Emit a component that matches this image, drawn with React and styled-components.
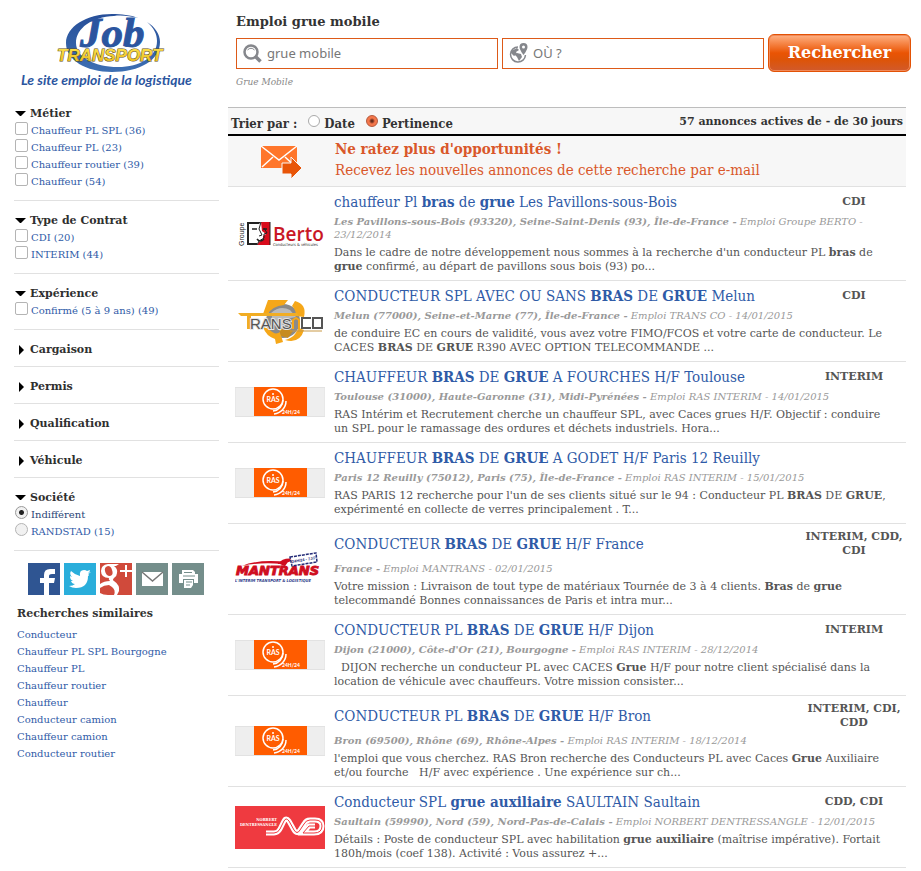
import React from "react";
import styled, { createGlobalStyle } from "styled-components";

const serif = '"DejaVu Serif", serif';
const condensed = '"DejaVu Serif Condensed", "DejaVu Serif", serif';
const sans = '"Noto Sans", "Open Sans", sans-serif';

const GlobalStyle = createGlobalStyle`
  *, *::before, *::after { box-sizing: border-box; }
  body { margin: 0; background: #fff; color: #333; font-family: ${serif}; font-size: 11px; }
  h1, h2, h3, p, ul, fieldset { margin: 0; padding: 0; border: 0; }
  ul { list-style: none; }
  a { color: #2f5ba7; text-decoration: none; }
`;

const Page = styled.div`
  display: grid;
  grid-template-columns: 205px minmax(0, 1fr);
  column-gap: 9px;
  padding: 0 10px 3px 14px;
`;

const Sidebar = styled.aside`
  display: flex;
  flex-direction: column;
`;

const LogoLink = styled.a`
  display: block;
  height: 94px;
  padding: 10px 0 0 4px;
  svg { display: block; }
`;

const Group = styled.section`
  padding: ${(p) => (p.$open ? "11px 0 10px" : "11px 0 8px")};
  border-bottom: 1px solid #e1e1e1;
`;

const GroupTitle = styled.h2`
  font-size: 11px;
  line-height: 17px;
`;

const GroupToggle = styled.button`
  display: flex;
  align-items: center;
  gap: 4px;
  width: 100%;
  padding: 0 0 0 1px;
  border: 0;
  background: none;
  color: #2f2f2f;
  font: inherit;
  text-align: left;
  svg { flex: none; }
`;

const Option = styled.label`
  display: flex;
  align-items: flex-start;
  gap: 3px;
  height: 17px;
  padding-left: 1px;
  color: ${(p) => (p.$current ? "#2a4577" : "#2f5ba7")};
  font-size: 10px;
  line-height: 17px;
`;

const Tick = styled.input`
  appearance: none;
  flex: none;
  width: 13px;
  height: 13px;
  margin: 0;
  border: 1px solid #b4b4b4;
  border-radius: ${(p) => (p.type === "radio" ? "50%" : "2px")};
  background: ${(p) => (p.type === "radio" ? "#f1f1f1" : "#fff")};
  &:checked {
    border-color: #999;
    background: radial-gradient(circle, #222 0 2px, #f1f1f1 3px);
  }
`;

const Share = styled.div`
  display: flex;
  gap: 4px;
  padding: 12px 14px 10px;
`;

const ShareLink = styled.a`
  width: 32px;
  height: 32px;
  background: ${(p) => p.$bg};
  svg { display: block; }
`;

const Related = styled.nav`
  padding-left: 3px;
  h2 { font-size: 11px; line-height: 18px; margin-bottom: 3px; }
  li { font-size: 10px; line-height: 17px; }
`;

const Main = styled.main`
  min-width: 0;
`;

const SearchForm = styled.form`
  padding: 13px 0 0 8px;
`;

const PageTitle = styled.h1`
  font-size: 13px;
  line-height: 18px;
`;

const SearchRow = styled.div`
  display: flex;
  align-items: center;
  gap: 4px;
  padding-top: 3px;
`;

const Field = styled.label`
  display: flex;
  align-items: center;
  flex: 1 1 0;
  min-width: 0;
  height: 31px;
  padding-left: 6px;
  gap: 5px;
  border: 1px solid #dd5a18;
  svg { flex: none; }
`;

const FieldInput = styled.input`
  flex: 1;
  min-width: 0;
  padding: 0;
  border: 0;
  outline: 0;
  background: transparent;
  color: #777;
  font: 13px/20px ${sans};
  &::placeholder { color: #777; opacity: 1; }
`;

const SearchButton = styled.button`
  flex: none;
  width: 143px;
  height: 38px;
  padding: 0;
  border: 1px solid #e35205;
  border-radius: 6px;
  background: linear-gradient(#ffb184 0%, #f58242 25%, #ea5404 50%, #dd5409 70%, #d15a2c 100%);
  box-shadow: inset 0 0 0 1px #f08a5a;
  color: #fff;
  font: bold 16px/20px ${serif};
`;

const Crumb = styled.p`
  padding-top: 3px;
  color: #888;
  font-size: 9px;
  font-style: italic;
  line-height: 14px;
`;

const Listing = styled.section`
  margin: 18px 5px 0 0;
`;

const SortBar = styled.div`
  display: flex;
  justify-content: space-between;
  align-items: center;
  height: 29px;
  padding: 0 3px;
  border-top: 1px solid #bdbdbd;
  border-bottom: 2px solid #000;
  background: #f7f7f7;
`;

const SortChoices = styled.fieldset`
  display: flex;
  align-items: center;
  gap: 11px;
  font: bold 13px/26px ${condensed};
  padding-top: 5px;
`;

const SortOption = styled.label`
  display: flex;
  align-items: center;
  gap: 4px;
`;

const SortRadio = styled.input`
  appearance: none;
  width: 12px;
  height: 12px;
  margin: 0 0 5px;
  border: 1px solid #a9a9a9;
  border-radius: 50%;
  background: #fff;
  &:checked {
    border-color: #b5573a;
    background: radial-gradient(circle, #6b2c1c 0 1px, #f4774b 3px);
  }
`;

const Count = styled.strong`
  font-size: 11px;
`;

const Alert = styled.a`
  display: grid;
  grid-template-columns: 107px 1fr;
  height: 51px;
  padding-top: 3px;
  border-bottom: 1px solid #e1e1e1;
  background: #f7f7f7;
  color: #d9572a;
  font: 15px/21px ${condensed};
  svg { margin: 6px 0 0 32px; }
  strong { display: block; }
`;

const Offer = styled.article`
  display: grid;
  grid-template-columns: 90px minmax(0, 1fr);
  column-gap: 9px;
  align-items: center;
  padding: 6px 0 6px 7px;
  border-bottom: 1px solid #e1e1e1;
`;

const OfferHead = styled.div`
  display: grid;
  grid-template-columns: minmax(0, 1fr) 104px;
  align-items: center;
`;

const OfferTitle = styled.h3`
  font: 15px/18px ${condensed};
`;

const Contract = styled.strong`
  color: #555;
  font-size: 11px;
  line-height: 14px;
  text-align: center;
`;

const Meta = styled.p`
  padding: 4px 5px 5px 0;
  color: #999;
  font-size: 10px;
  font-style: italic;
  line-height: 13px;
`;

const Excerpt = styled.p`
  padding-right: 10px;
  color: #555;
  font-size: 11px;
  line-height: 14px;
`;

const LogoArt = styled.svg`
  display: block;
  overflow: hidden;
`;

function rich(text) {
  return text.split("*").map((part, i) => (i % 2 ? <b key={i}>{part}</b> : part));
}

function BrandLogo() {
  return (
    <svg width="190" height="83" viewBox="18 10 190 83" role="img" aria-label="Job Transport">
      <defs>
        <linearGradient id="brand" x2="0" y2="1">
          <stop offset="0" stopColor="#274f99" />
          <stop offset="1" stopColor="#3d6fb3" />
        </linearGradient>
        <linearGradient id="gold" x2="0" y2="1">
          <stop offset="0" stopColor="#ffe552" />
          <stop offset="1" stopColor="#e5b512" />
        </linearGradient>
      </defs>
      <path fill="url(#brand)" fillRule="evenodd" d="M112 14C86 14 66 27 66 43C66 60 86 72 112 72C140 72 160 60 160 42C160 34 155 27 147 22C154 28 157 34 157 41C157 57 140 67 118 67C94 67 76 57 76 43C76 28 92 17 114 16C121 15 130 16 138 18C131 15 121 14 112 14Z" />
      <text x="80" y="47" fill="#2b559f" stroke="#2b559f" strokeWidth="1" fontFamily="Liberation Serif" fontStyle="italic" fontWeight="bold" fontSize="43">Job</text>
      <text x="57" y="61" fill="url(#gold)" stroke="#5c4d18" strokeWidth="1" paintOrder="stroke" fontFamily="Liberation Sans" fontStyle="italic" fontWeight="bold" fontSize="17">TRANSPORT</text>
      <text x="21" y="85" fill="#2c569f" fontFamily="Lato" fontStyle="italic" fontWeight="bold" fontSize="14">Le site emploi de la logistique</text>
    </svg>
  );
}

function Arrow({ open }) {
  return (
    <svg width="11" height="10" viewBox="0 0 11 10" aria-hidden="true">
      <path d={open ? "M0 2H11L6 7H5Z" : "M4 0L9 5L4 10Z"} />
    </svg>
  );
}

function FacetGroup({ title, items = [], type = "checkbox" }) {
  const open = items.length > 0;
  return (
    <Group $open={open}>
      <GroupTitle>
        <GroupToggle type="button" aria-expanded={open}>
          <Arrow open={open} />
          {title}
        </GroupToggle>
      </GroupTitle>
      {items.map((item, i) => {
        const current = type === "radio" && i === 0;
        return (
          <Option key={item} $current={current}>
            <Tick type={type} name={title} defaultChecked={current} />
            {item}
          </Option>
        );
      })}
    </Group>
  );
}

function Berto() {
  return (
    <LogoArt width="90" height="44" viewBox="0 0 90 44" role="img" aria-label="Groupe Berto">
      <text transform="translate(9 34) rotate(-90)" fontFamily="Liberation Sans" fontSize="7" fill="#222">Groupe</text>
      <path d="M12 10H26L24 12H14V31H22V33H12Z" fill="#222" />
      <path d="M26 10H35V33H22L24 30L28 28V24L31 22L27 19Z" fill="#d90b1b" />
      <path d="M26 10L24 17L27 23L24 24M35 10V33M22 33L24 29L29 26V22L32 21L29 16" fill="none" stroke="#222" strokeWidth="1" />
      <path d="M17 17H22M28 17H32M22 27Q25 31 29 27" fill="none" stroke="#222" strokeWidth="1.5" />
      <text x="38" y="29" fontFamily="Open Sans" fontWeight="600" fontSize="19" fill="#c91725">Berto</text>
      <text x="38" y="34" fontFamily="DejaVu Sans Condensed" fontSize="4" fill="#333">Conducteurs &amp; véhicules</text>
    </LogoArt>
  );
}

function TransCo() {
  return (
    <LogoArt width="90" height="46" viewBox="0 0 90 46" role="img" aria-label="Trans Co">
      <circle cx="48" cy="23" r="17" fill="#8a8a8a" />
      <path d="M36 15Q45 7 55 12L61 19L50 21L47 31L39 26Z" fill="#bbb" />
      <path d="M28 16L33 2H53L49 7Q37 8 32 17ZM60 3Q72 6 69 19L61 18Q61 12 57 8ZM64 30L69 32Q65 46 50 42Q57 40 60 36ZM28 29L34 31Q40 38 45 34L48 44L41 46L40 41Q31 38 28 29Z" fill="#f5a719" />
      <path d="M44 31L52 30L58 33L53 40L46 38Z" fill="#c68b1f" />
      <path d="M3 15H62L64 18H16V31H12V18H6Z" fill="#f1ad24" />
      <text x="15" y="31" fontFamily="Liberation Sans" fontSize="15" fill="#555" stroke="#e5e5e5" strokeWidth="2" paintOrder="stroke">RANS</text>
      <path d="M58 31V22L61 20L64 22V31" fill="none" stroke="#f5a719" strokeWidth="2" />
      <path d="M76 20H67V30H76M78 20H87V30H78Z" fill="none" stroke="#555" strokeWidth="2" />
      <path d="M55 33H87" stroke="#c99946" strokeWidth="1" />
    </LogoArt>
  );
}

function Ras() {
  return (
    <LogoArt width="90" height="30" viewBox="0 0 90 30" role="img" aria-label="RAS 24H/24">
      <path d="M0 .5H90V29.5H0Z" fill="#eee" stroke="#e2e2e2" />
      <rect x="19" width="53" height="29" fill="#ff5c00" />
      <circle cx="38" cy="12" r="10" fill="none" stroke="#fff" strokeWidth="1.5" />
      <path d="M48 13A11 11 0 0 1 38 24M51 14A13 13 0 0 1 39 27" fill="none" stroke="#fff" strokeWidth="1.5" />
      <circle cx="38" cy="7" r="1" fill="#fff" />
      <text x="38" y="15" textAnchor="middle" fontFamily="Lato" fontWeight="bold" fontSize="7" fill="#fff">RAS</text>
      <text x="47" y="27" fontFamily="Lato" fontWeight="bold" fontSize="5" fill="#fff">24H/24</text>
    </LogoArt>
  );
}

function Mantrans() {
  return (
    <LogoArt width="90" height="34" viewBox="0 0 90 34" role="img" aria-label="Mantrans">
      <path d="M7 14Q22 7 53 10L50 14L45 13L47 12Q25 10 7 14ZM43 12Q48 5 59 7L54 10Z" fill="#cf0d20" />
      <text x="1" y="23" fontFamily="DejaVu Sans" fontStyle="italic" fontWeight="bold" fontSize="13" fill="#cf0d20" stroke="#cf0d20">MANTRANS</text>
      <path d="M55 5L81 1L82 10L57 14Z" fill="#fff" stroke="#232b77" strokeWidth="1.5" strokeDasharray="3 1" />
      <text transform="translate(57 11) rotate(-9)" fontFamily="Liberation Sans" fontWeight="bold" fontSize="4" fill="#232b77">24H/24 - 7J/7</text>
      <text x="0" y="30" fontFamily="DejaVu Sans Condensed" fontStyle="italic" fontWeight="bold" fontSize="4" fill="#30408b">L'INTERIM TRANSPORT &amp; LOGISTIQUE</text>
    </LogoArt>
  );
}

function Norbert() {
  const mark = "M31 27H39Q43 27 45 23L49 15Q51 11 54 15L59 24Q62 29 65 24L69 18Q71 14 75 14H80Q87 14 87 20Q87 27 79 27H68L74 20H80";
  return (
    <LogoArt width="90" height="43" viewBox="0 0 90 43" role="img" aria-label="Norbert Dentressangle">
      <rect width="90" height="43" fill="#ef3a40" />
      <text x="42" y="15" textAnchor="end" fontFamily="DejaVu Serif Condensed" fontWeight="bold" fontSize="4" fill="#fff">NORBERT</text>
      <text x="42" y="20" textAnchor="end" fontFamily="DejaVu Serif Condensed" fontWeight="bold" fontSize="4" fill="#fff">DENTRESSANGLE</text>
      <path d={mark} fill="none" stroke="#fff" strokeWidth="5" />
      <path d={mark} fill="none" stroke="#ef3a40" strokeWidth="1" />
    </LogoArt>
  );
}

const facets = [
  { title: "Métier", items: ["Chauffeur PL SPL (36)", "Chauffeur PL (23)", "Chauffeur routier (39)", "Chauffeur (54)"] },
  { title: "Type de Contrat", items: ["CDI (20)", "INTERIM (44)"] },
  { title: "Expérience", items: ["Confirmé (5 à 9 ans) (49)"] },
  { title: "Cargaison" },
  { title: "Permis" },
  { title: "Qualification" },
  { title: "Véhicule" },
  { title: "Société", type: "radio", items: ["Indifférent", "RANDSTAD (15)"] },
];

const related = ["Conducteur", "Chauffeur PL SPL Bourgogne", "Chauffeur PL", "Chauffeur routier", "Chauffeur", "Conducteur camion", "Chauffeur camion", "Conducteur routier"];

const offers = [
  { Logo: Berto, title: "chauffeur Pl *bras* de *grue* Les Pavillons-sous-Bois", contract: "CDI", meta: "*Les Pavillons-sous-Bois (93320), Seine-Saint-Denis (93), Île-de-France -* Emploi Groupe BERTO - 23/12/2014", text: "Dans le cadre de notre développement nous sommes à la recherche d'un conducteur PL *bras* de *grue* confirmé, au départ de pavillons sous bois (93) po..." },
  { Logo: TransCo, title: "CONDUCTEUR SPL AVEC OU SANS *BRAS* DE *GRUE* Melun", contract: "CDI", meta: "*Melun (77000), Seine-et-Marne (77), Île-de-France -* Emploi TRANS CO - 14/01/2015", text: "de conduire EC en cours de validité, vous avez votre FIMO/FCOS et votre carte de conducteur. Le CACES *BRAS* DE *GRUE* R390 AVEC OPTION TELECOMMANDE ..." },
  { Logo: Ras, title: "CHAUFFEUR *BRAS* DE *GRUE* A FOURCHES H/F Toulouse", contract: "INTERIM", meta: "*Toulouse (31000), Haute-Garonne (31), Midi-Pyrénées -* Emploi RAS INTERIM - 14/01/2015", text: "RAS Intérim et Recrutement cherche un chauffeur SPL, avec Caces grues H/F. Objectif : conduire un SPL pour le ramassage des ordures et déchets industriels. Hora..." },
  { Logo: Ras, title: "CHAUFFEUR *BRAS* DE *GRUE* A GODET H/F Paris 12 Reuilly", contract: "", meta: "*Paris 12 Reuilly (75012), Paris (75), Île-de-France -* Emploi RAS INTERIM - 15/01/2015", text: "RAS PARIS 12 recherche pour l'un de ses clients situé sur le 94 : Conducteur PL *BRAS* DE *GRUE*, expérimenté en collecte de verres principalement . T..." },
  { Logo: Mantrans, title: "CONDUCTEUR *BRAS* DE *GRUE* H/F France", contract: "INTERIM, CDD, CDI", meta: "*France -* Emploi MANTRANS - 02/01/2015", text: "Votre mission : Livraison de tout type de matériaux Tournée de 3 à 4 clients. *Bras* de *grue* telecommandé Bonnes connaissances de Paris et intra mur..." },
  { Logo: Ras, title: "CONDUCTEUR PL *BRAS* DE *GRUE* H/F Dijon", contract: "INTERIM", meta: "*Dijon (21000), Côte-d'Or (21), Bourgogne -* Emploi RAS INTERIM - 28/12/2014", text: "\u00a0 DIJON recherche un conducteur PL avec CACES *Grue* H/F pour notre client spécialisé dans la location de véhicule avec chauffeurs. Votre mission consister..." },
  { Logo: Ras, title: "CONDUCTEUR PL *BRAS* DE *GRUE* H/F Bron", contract: "INTERIM, CDI, CDD", meta: "*Bron (69500), Rhône (69), Rhône-Alpes -* Emploi RAS INTERIM - 18/12/2014", text: "l'emploi que vous cherchez. RAS Bron recherche des Conducteurs PL avec Caces *Grue* Auxiliaire et/ou fourche \u00a0 H/F avec expérience . Une expérience sur ch..." },
  { Logo: Norbert, title: "Conducteur SPL *grue auxiliaire* SAULTAIN Saultain", contract: "CDD, CDI", meta: "*Saultain (59990), Nord (59), Nord-Pas-de-Calais -* Emploi NORBERT DENTRESSANGLE - 12/01/2015", text: "Détails : Poste de conducteur SPL avec habilitation *grue auxiliaire* (maîtrise impérative). Fortait 180h/mois (coef 138). Activité : Vous assurez +..." },
];

const shares = [
  { label: "Facebook", bg: "#2f5592", art: <path fill="#fff" d="M16 32V20H12V15H16V12Q16 6 22 6H27V11H24Q21 11 21 13V15H27L26 20H21V32Z" /> },
  { label: "Twitter", bg: "#2aaedb", art: <path fill="#fff" d="M27 9Q26 10 24 11Q26 12 24 13Q24 25 12 25Q8 25 5 23Q9 23 11 21Q8 21 7 18H9Q6 17 6 13L8 14Q5 11 7 8Q11 12 16 13Q15 7 20 7Q22 7 23 8L26 7Q26 9 24 10Z" /> },
  { label: "Google Plus", bg: "#d04a3b", art: <g fill="#fff"><path fillRule="evenodd" d="M8 1H19L16 3H14Q18 6 17 10Q17 13 14 15Q12 17 14 18Q20 22 19 28L17 32H14Q16 27 12 24L9 22Q4 22 0 25V21Q4 18 10 18Q8 16 9 15Q1 15 1 8Q1 2 8 1ZM8 3Q4 4 5 8Q6 13 10 13Q14 12 12 7Q11 3 8 3Z" /><path d="M25 2H27V7H32V9H27V14H25V9H20V7H25ZM0 30Q3 32 8 32H0Z" /></g> },
  { label: "E-mail", bg: "#748e8b", art: <g><path d="M6 9H27V23H6Z" fill="#fff" /><path d="M6 9L16.5 18L27 9" fill="none" stroke="#777" strokeWidth="1.5" /></g> },
  { label: "Imprimer", bg: "#748e8b", art: <g fill="#fff"><path d="M10 7H21L23 9V12H10ZM7 11H26V20H22V16H11V20H7ZM12 17H21V22L19 25H12Z" /><path d="M11 13H23M14 19H20M14 22H18M12 9.5H20" stroke="#748e8b" strokeWidth="1" /></g> },
];

export default function App() {
  return (
    <>
      <GlobalStyle />
      <Page>
        <Sidebar>
          <LogoLink href="#accueil"><BrandLogo /></LogoLink>
          {facets.map((f) => <FacetGroup key={f.title} {...f} />)}
          <Share>
            {shares.map((s) => (
              <ShareLink key={s.label} href="#partager" aria-label={s.label} $bg={s.bg}>
                <svg width="32" height="32" viewBox="0 0 32 32" aria-hidden="true">{s.art}</svg>
              </ShareLink>
            ))}
          </Share>
          <Related>
            <h2>Recherches similaires</h2>
            <ul>{related.map((r) => <li key={r}><a href="#recherche">{r}</a></li>)}</ul>
          </Related>
        </Sidebar>
        <Main>
          <SearchForm onSubmit={(e) => e.preventDefault()}>
            <PageTitle>Emploi grue mobile</PageTitle>
            <SearchRow>
              <Field>
                <svg width="19" height="19" viewBox="0 0 19 19" aria-hidden="true" fill="none" stroke="#85878c">
                  <circle cx="8" cy="8" r="6.5" strokeWidth="2.5" />
                  <path d="M4.5 6Q8 2.500 11.5 6" strokeWidth="1" />
                  <path d="M13 13L17.5 17.5" strokeWidth="3.5" />
                </svg>
                <FieldInput aria-label="Métier ou mot-clé" defaultValue="grue mobile" />
              </Field>
              <Field>
                <svg width="19" height="20" viewBox="0 0 19 20" aria-hidden="true" fill="#85878c">
                  <path d="M9 4A7.5 7.5 0 1 0 16.5 12" fill="none" stroke="#85878c" strokeWidth="1.5" />
                  <path d="M2 8L8 5L10 7L7 9L8 11L5 13L2 10ZM8 10L12 11L13 14L10 18L8 14L6 12Z" />
                  <path fillRule="evenodd" d="M14.5 0A4 4 0 0 0 10.5 4C10.5 7 14.5 12 14.5 12S18.5 7 18.5 4A4 4 0 0 0 14.5 0ZM14.5 2.500A1.5 1.5 0 1 1 14.5 5.5A1.5 1.5 0 0 1 14.5 2.500Z" />
                </svg>
                <FieldInput aria-label="Lieu" placeholder="OÙ ?" />
              </Field>
              <SearchButton type="submit">Rechercher</SearchButton>
            </SearchRow>
            <Crumb>Grue Mobile</Crumb>
          </SearchForm>
          <Listing>
            <SortBar>
              <SortChoices>
                <span>Trier par :</span>
                <SortOption><SortRadio type="radio" name="tri" />Date</SortOption>
                <SortOption><SortRadio type="radio" name="tri" defaultChecked />Pertinence</SortOption>
              </SortChoices>
              <Count>57 annonces actives de - de 30 jours</Count>
            </SortBar>
            <Alert href="#alerte">
              <svg width="43" height="36" viewBox="0 0 43 36" aria-hidden="true">
                <path d="M1 1H37V23H1Z" fill="#ff762b" />
                <path d="M1 1L19 15L37 1M2 22L13 12M36 22L25 12" fill="none" stroke="#fff" strokeWidth="1.5" />
                <path d="M22 18H31V12L42 23L31 34V29H22Z" fill="#e85508" stroke="#f7f7f7" strokeWidth="1" />
              </svg>
              <span><strong>Ne ratez plus d'opportunités !</strong>Recevez les nouvelles annonces de cette recherche par e-mail</span>
            </Alert>
            {offers.map(({ Logo, title, contract, meta, text }) => (
              <Offer key={title}>
                <Logo />
                <div>
                  <OfferHead>
                    <OfferTitle><a href="#offre">{rich(title)}</a></OfferTitle>
                    <Contract>{contract}</Contract>
                  </OfferHead>
                  <Meta>{rich(meta)}</Meta>
                  <Excerpt>{rich(text)}</Excerpt>
                </div>
              </Offer>
            ))}
          </Listing>
        </Main>
      </Page>
    </>
  );
}
